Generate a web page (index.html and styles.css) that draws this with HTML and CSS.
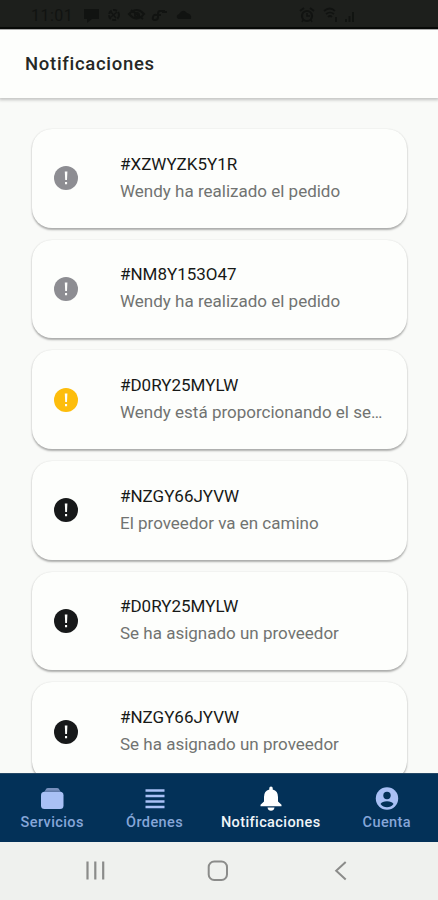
FILE: index.html
```html
<!DOCTYPE html>
<html lang="es">
<head>
<meta charset="utf-8">
<title>Notificaciones</title>
<link rel="stylesheet" href="styles.css">
</head>
<body>
<svg class="defs" width="0" height="0">
  <symbol id="alert" viewBox="0 0 24 24">
    <circle cx="12" cy="12" r="12" fill="currentColor"/>
    <path d="M10.8 5.5h2.6l-.4 8.600h-1.800zM11 16h2.100v2.200H11z" fill="#fdfefc"/>
  </symbol>
</svg>
<div class="screen">
  <div class="status">
    <span class="clock">11:01</span>
    <svg class="status-left" width="110" height="16" viewBox="0 0 110 16" fill="currentColor">
      <path d="M1 2h15v10H9l-5 4v-4H1z"/>
      <g fill="none" stroke="currentColor" stroke-width="2"><circle cx="31" cy="8" r="5" stroke-dasharray="4 1.500"/><path d="M28 5l5 6M34 5l-6 5" stroke-width="1.500"/><path d="M46 7q8-8 15 0-7 9-15 0zM48 3l12 9"/><circle cx="54" cy="8" r="2"/></g>
      <path d="M82 4h-5q-2 0-2 3v3q0 3-3 3t-2-3 3-2h5m1-3h5" fill="none" stroke="currentColor" stroke-width="2"/>
      <path d="M95 12q-3-3 1-5 4-6 8-1 5 1 4 6z"/>
    </svg>
    <svg class="status-right" width="58" height="17" viewBox="0 0 58 17" fill="none" stroke="currentColor">
      <path d="M2 4l4-3M12 1l4 3" stroke-width="2"/><circle cx="9" cy="9" r="5" stroke-width="2.200"/><path d="M9 6v3h3M5 13l-1 2M13 13l1 2" stroke-width="1.500"/>
      <path d="M26 4q6-5 11 0M28 7q4-3 8 0M30 10q2-2 4 0M38 10v5" stroke-width="1.700"/>
      <path d="M48 15v-3M51.500 15V9M55 15V5" stroke-width="1.800"/>
    </svg>
  </div>
  <header class="header"><h1>Notificaciones</h1></header>
  <main class="list">
    <article class="card"><svg class="icon gray"><use href="#alert"/></svg><div class="copy"><h2>#XZWYZK5Y1R</h2><p>Wendy ha realizado el pedido</p></div></article>
    <article class="card"><svg class="icon gray"><use href="#alert"/></svg><div class="copy"><h2>#NM8Y153O47</h2><p>Wendy ha realizado el pedido</p></div></article>
    <article class="card"><svg class="icon amber"><use href="#alert"/></svg><div class="copy"><h2>#D0RY25MYLW</h2><p>Wendy está proporcionando el se…</p></div></article>
    <article class="card"><svg class="icon"><use href="#alert"/></svg><div class="copy"><h2>#NZGY66JYVW</h2><p>El proveedor va en camino</p></div></article>
    <article class="card"><svg class="icon"><use href="#alert"/></svg><div class="copy"><h2>#D0RY25MYLW</h2><p>Se ha asignado un proveedor</p></div></article>
    <article class="card"><svg class="icon"><use href="#alert"/></svg><div class="copy"><h2>#NZGY66JYVW</h2><p>Se ha asignado un proveedor</p></div></article>
  </main>
  <nav class="tabs">
    <a class="tab"><svg width="26" height="26" viewBox="0 0 26 26"><path d="M5 6l2-4q.5-1 2-1h9q1.500 0 2 1l2 4z" fill="#7890bd"/><rect x="2" y="4.700" width="22.500" height="17.300" rx="3.500" fill="#a9c0f5"/><path d="M5.500 5l1-1.500h14l1 1.500z" fill="#6079a9"/></svg><span>Servicios</span></a>
    <a class="tab"><svg width="26" height="26" viewBox="0 0 26 26"><path d="M3.500 3.500h19M3.500 9h19M3.500 14.500h19M3.500 20h19" stroke="#a9c0f5" stroke-width="2.300"/></svg><span>Órdenes</span></a>
    <a class="tab wide active"><svg width="26" height="26" viewBox="0 0 26 26" fill="#fff"><path d="M11.300 2.500V1q0-1.500 1.700-1.500T14.700 1v1.500q5.300 1.400 5.300 7.500v4.500l3.500 3.300v1.400h-21v-1.400L6 14.500V10q0-6.100 5.300-7.500zM9.500 20.500h7q-.6 3.200-3.500 3.200t-3.500-3.200z"/></svg><span>Notificaciones</span></a>
    <a class="tab"><svg width="26" height="26" viewBox="0 0 26 26"><circle cx="13" cy="11.500" r="11.200" fill="#a9c0f5"/><circle cx="13" cy="8.500" r="3.700" fill="#033158"/><path d="M6.500 17q1.700-2.800 6.500-2.800t6.500 2.800q-2.600 3.200-6.500 3.200T6.500 17z" fill="#033158"/></svg><span>Cuenta</span></a>
  </nav>
  <div class="system">
    <svg width="438" height="58" viewBox="0 0 438 58" fill="none" stroke="#8b8c8a">
      <path d="M87.500 19.500v18M95.300 19.500v18M103.200 19.500v18" stroke-width="2.200"/>
      <rect x="208.700" y="19.500" width="18.300" height="18.500" rx="5.500" stroke-width="2"/>
      <path d="M345.700 20l-9.500 8.800 9.500 8.800" stroke-width="2"/>
    </svg>
  </div>
</div>
</body>
</html>
```
FILE: styles.css
```css
* { box-sizing: border-box; }
body { margin: 0; font-family: Roboto, "Liberation Sans", sans-serif; background: #f9faf8; }
.defs { position: absolute; }
.screen { width: 438px; height: 900px; display: flex; flex-direction: column; overflow: hidden; }
.status { height: 29px; flex: none; display: flex; align-items: flex-start; padding: 7px 0 0 31px; background: #1d1f1c; color: #111311; border-bottom: 2px solid #080a08; }
.clock { width: 52px; font-size: 16px; line-height: 18px; letter-spacing: .5px; }
.status-left { flex: none; }
.status-right { flex: none; margin-left: 105px; }
.header { height: 69px; flex: none; display: flex; align-items: center; padding-left: 25px; background: #fdfefc; border-top: 1px solid #aaa; box-shadow: 0 1px 3px 1px rgba(0,0,0,.22); z-index: 1; }
h1 { margin: 0; font-size: 18.500px; font-weight: 500; line-height: 24px; letter-spacing: .7px; color: #262826; }
.list { flex: 1; min-height: 0; overflow: hidden; padding: 31px 31px 0 32px; display: flex; flex-direction: column; gap: 12px; }
.card { height: 98.700px; flex: none; display: flex; align-items: center; border-radius: 20px; background: #fdfefc; padding: 0 20px 0 22px; box-shadow: 0 1.500px 2px rgba(0,0,0,.3), 0 0 2px rgba(0,0,0,.05); }
.icon { width: 24px; height: 24px; flex: none; margin-right: 42px; color: #17191a; }
.gray { color: #8d8d92; }
.amber { color: #fdbd0c; }
.copy { min-width: 0; flex: 1; padding-bottom: 1.400px; }
h2, p { margin: 0; font-size: 17px; line-height: 27px; font-weight: 400; white-space: nowrap; }
h2 { color: #171917; }
p { color: #717371; }
.tabs { height: 69px; flex: none; display: flex; padding-left: 1px; background: #033158; color: #86a6d8; border-top: 1px solid #254866; z-index: 1; }
.tab { width: 102.500px; display: flex; flex-direction: column; align-items: center; padding-top: 13px; font-size: 14.500px; line-height: 18px; font-weight: 500; letter-spacing: .4px; }
.tab svg { flex: none; overflow: visible; margin-bottom: 1px; }
.wide { width: 130px; }
.active { color: #f0f5f8; }
.system { height: 58px; flex: none; background: #eff1ee; }
.system svg { display: block; }
```
